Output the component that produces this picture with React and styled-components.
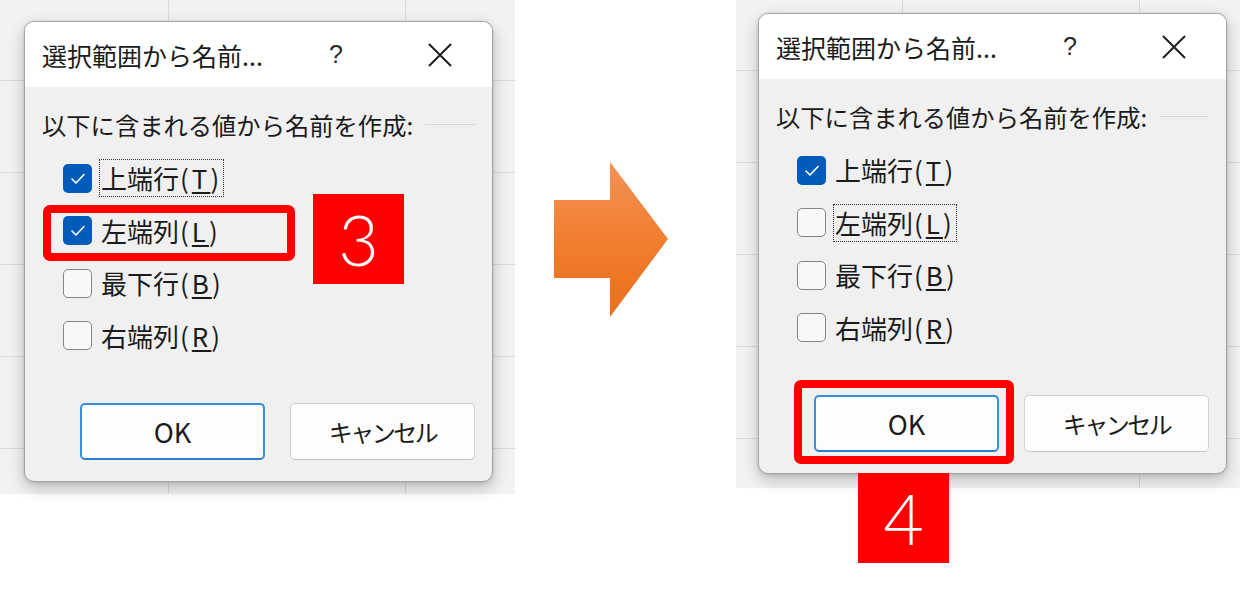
import React from 'react';
import styled, { createGlobalStyle } from 'styled-components';

const GlobalStyle = createGlobalStyle`
	html, body {
		margin: 0;
		padding: 0;
		background: #ffffff;
	}

	body {
		font-family: 'Noto Sans CJK JP', 'Noto Sans', sans-serif;
		color: #1b1b1b;
	}
`;

const Page = styled.div`
	display: flex;
	align-items: flex-start;
	width: 1240px;
	height: 605px;
	overflow: hidden;
`;

const Screen = styled.div`
	position: relative;
	flex: none;
	box-sizing: border-box;
	width: ${props => props.w}px;
	height: ${props => props.h}px;
	padding: ${props => props.pad};
	background-color: #f2f2f2;
	background-image: linear-gradient(to right, #d9d9d9 1px, transparent 1px),
		linear-gradient(to bottom, #d9d9d9 1px, transparent 1px);
	background-size: 237px 92px;
	background-position: ${props => props.grid};
`;

const ArrowWrap = styled.div`
	flex: none;
	width: 114px;
	height: 155px;
	margin: 162px 68px 0 39px;
`;

const Dialog = styled.div`
	position: relative;
	width: 469px;
	height: 461px;
	box-sizing: border-box;
	border: 1px solid #a3a3a3;
	border-radius: 10px;
	background: #f0f0f0;
	box-shadow: 0 6px 16px rgba(0, 0, 0, 0.22), 0 1px 4px rgba(0, 0, 0, 0.12);
`;

const TitleBar = styled.div`
	display: flex;
	align-items: center;
	height: 65px;
	padding-left: 17px;
	background: #ffffff;
	border-radius: 9px 9px 0 0;
`;

const Title = styled.div`
	flex: 1;
	font-size: 25px;
	white-space: nowrap;
`;

const HelpButton = styled.div`
	width: 48px;
	margin-right: 48px;
	text-align: center;
	font-family: 'Liberation Sans', sans-serif;
	font-size: 25px;
	color: #2a2a2a;
`;

const CloseButton = styled.div`
	display: flex;
	align-items: center;
	justify-content: center;
	width: 64px;
	margin-right: 20px;
`;

const Body = styled.div`
	padding: 21px 17px 0 17px;
`;

const Legend = styled.div`
	display: flex;
	align-items: center;
	height: 32px;
	font-size: 24.3px;
	white-space: nowrap;
`;

const LegendRule = styled.div`
	flex: 1;
	height: 1px;
	margin-left: 12px;
	background: #d6d6d6;
`;

const Options = styled.div`
	display: flex;
	flex-direction: column;
	margin-top: 12px;
	padding-left: 21px;
`;

const Option = styled.div`
	display: flex;
	align-items: center;
	height: 52.5px;
`;

const Box = styled.div`
	display: flex;
	align-items: center;
	justify-content: center;
	flex: none;
	box-sizing: border-box;
	width: 29px;
	height: 29px;
	border-radius: 5px;
	background: ${props => (props.checked ? '#005cb8' : '#f8f8f8')};
	border: ${props => (props.checked ? 'none' : '1.5px solid #858585')};
`;

const OptionLabel = styled.span`
	margin-left: 7px;
	padding: 0 1px;
	font-size: 26px;
	line-height: 36px;
	border: 1px dotted ${props => (props.focused ? '#2b2b2b' : 'transparent')};
	white-space: nowrap;
`;

const AccessKey = styled.span`
	margin-left: 1px;
	letter-spacing: 3px;

	u {
		text-underline-offset: 3px;
		text-decoration-thickness: 1.5px;
	}
`;

const Buttons = styled.div`
	display: flex;
	gap: 25px;
	margin-top: 41px;
	padding-left: 38px;
`;

const Button = styled.div`
	display: flex;
	align-items: center;
	justify-content: center;
	box-sizing: border-box;
	width: 185px;
	height: 57px;
	border-radius: 5px;
	background: #fdfdfd;
	border: ${props => (props.primary ? '2px solid #3a8ddc' : '1px solid #d3d3d3')};
	border-bottom-color: ${props => (props.primary ? '#2a7fd4' : '#c2c2c2')};
	font-size: ${props => (props.primary ? '27px' : '24px')};
	letter-spacing: ${props => (props.primary ? '0' : '-2.5px')};
	color: #1b1b1b;
`;

const Highlight = styled.div`
	position: absolute;
	left: ${props => props.x}px;
	top: ${props => props.y}px;
	width: ${props => props.w}px;
	height: ${props => props.h}px;
	box-sizing: border-box;
	border: 8px solid #ff0000;
	border-radius: 7px;
	pointer-events: none;
`;

const Step = styled.div`
	position: absolute;
	left: ${props => props.x}px;
	top: ${props => props.y}px;
	display: flex;
	align-items: center;
	justify-content: center;
	width: 91px;
	height: 90px;
	background: #ff0000;
	color: #ffffff;
	font-family: Lato, 'Noto Sans', sans-serif;
	font-weight: 300;
	font-size: 70px;
	line-height: 1;
`;

const CheckMark = () => (
	<svg width="29" height="29" viewBox="0 0 29 29">
		<path d="M9 15 L13 19 L21 10.5" fill="none" stroke="#ffffff" strokeWidth="1.6" strokeLinecap="round" strokeLinejoin="round" />
	</svg>
);

const CloseIcon = () => (
	<svg width="24" height="24" viewBox="0 0 24 24">
		<path d="M1 1 L23 23 M23 1 L1 23" stroke="#1f1f1f" strokeWidth="2" fill="none" />
	</svg>
);

const Arrow = () => (
	<svg width="114" height="155" viewBox="0 0 114 155">
		<defs>
			<linearGradient id="arrowFill" x1="0" y1="0" x2="0" y2="1">
				<stop offset="0" stopColor="#f39257" />
				<stop offset="0.5" stopColor="#f07e2f" />
				<stop offset="1" stopColor="#ec6f1c" />
			</linearGradient>
		</defs>
		<polygon points="0,38 56,38 56,0 114,77 56,155 56,116 0,116" fill="url(#arrowFill)" />
	</svg>
);

const options = [
	{ name: '上端行', key: 'T' },
	{ name: '左端列', key: 'L' },
	{ name: '最下行', key: 'B' },
	{ name: '右端列', key: 'R' },
];

const NameDialog = ({ checked, focus, children }) => (
	<Dialog>
		<TitleBar>
			<Title>選択範囲から名前...</Title>
			<HelpButton>?</HelpButton>
			<CloseButton>
				<CloseIcon />
			</CloseButton>
		</TitleBar>
		<Body>
			<Legend>
				以下に含まれる値から名前を作成:
				<LegendRule />
			</Legend>
			<Options>
				{options.map((item, index) => (
					<Option key={item.key}>
						<Box checked={checked[index]}>{checked[index] && <CheckMark />}</Box>
						<OptionLabel focused={focus === index}>
							{item.name}
							<AccessKey>
								(<u>{item.key}</u>)
							</AccessKey>
						</OptionLabel>
					</Option>
				))}
			</Options>
			<Buttons>
				<Button primary>OK</Button>
				<Button>キャンセル</Button>
			</Buttons>
		</Body>
		{children}
	</Dialog>
);

const App = () => (
	<>
		<GlobalStyle />
		<Page>
			<Screen w={515} h={494} pad="21px 0 0 24px" grid="168px 80px">
				<NameDialog checked={[true, true, false, false]} focus={0}>
					<Highlight x={18} y={183} w={252} h={56} />
					<Step x={288} y={172}>3</Step>
				</NameDialog>
			</Screen>
			<ArrowWrap>
				<Arrow />
			</ArrowWrap>
			<Screen w={504} h={488} pad="13px 0 0 22px" grid="166px 70px">
				<NameDialog checked={[true, false, false, false]} focus={1}>
					<Highlight x={35} y={366} w={220} h={84} />
				</NameDialog>
				<Step x={122} y={473}>4</Step>
			</Screen>
		</Page>
	</>
);

export default App;
